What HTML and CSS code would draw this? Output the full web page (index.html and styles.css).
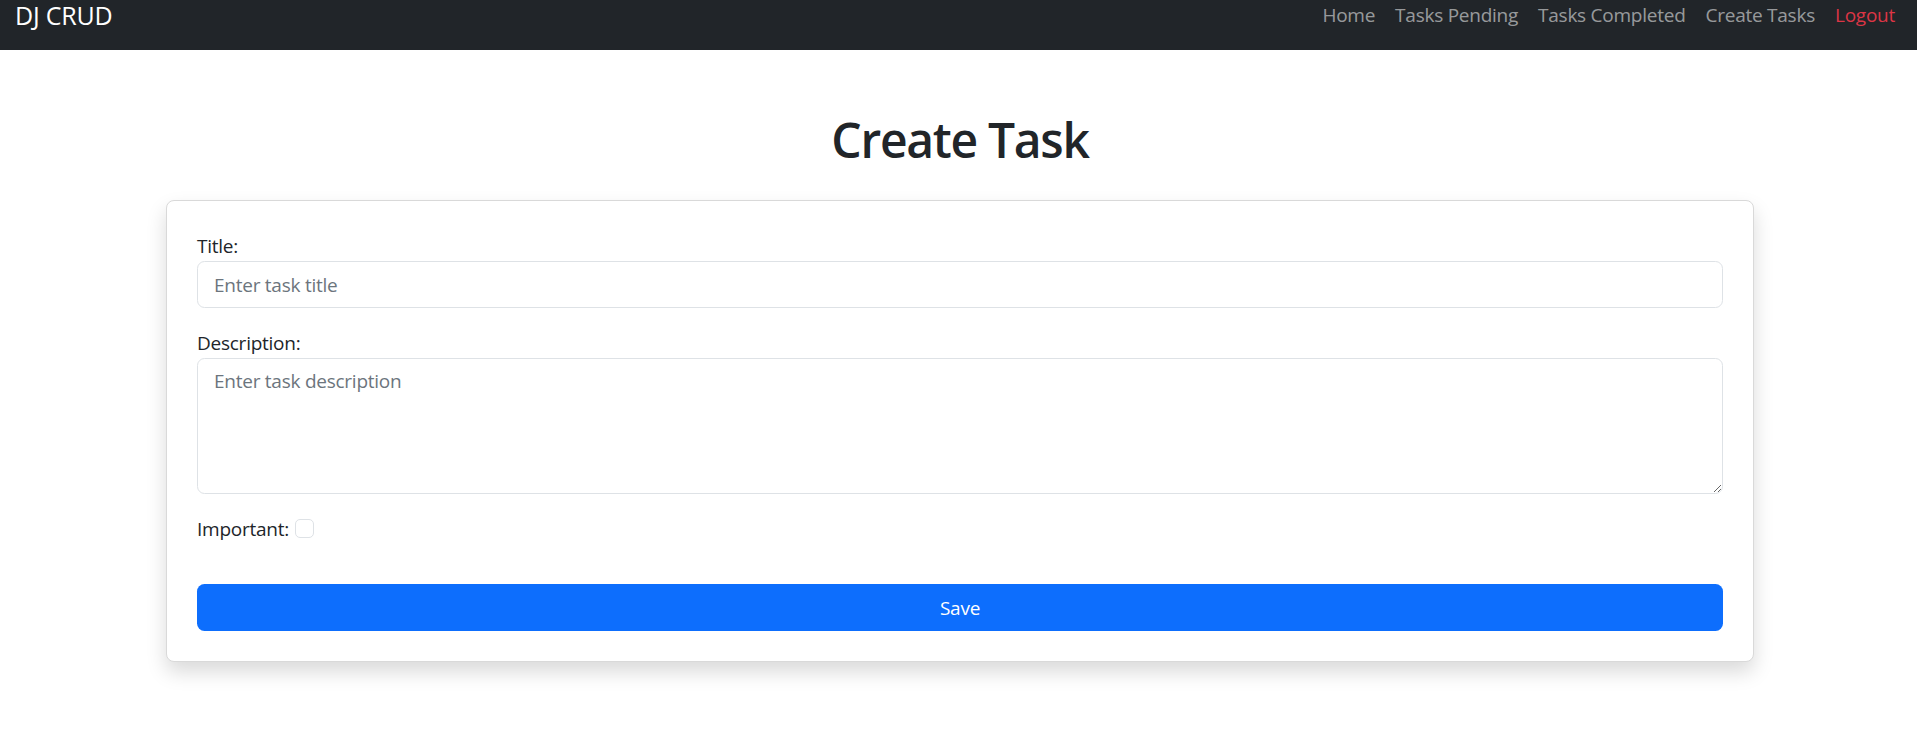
FILE: index.html
```html
<!DOCTYPE html>
<html lang="en">
<head>
<meta charset="utf-8">
<title>DJ CRUD - Create Task</title>
<link rel="stylesheet" href="styles.css">
</head>
<body>
<nav class="navbar">
  <a class="brand" href="#">DJ CRUD</a>
  <ul class="nav-links">
    <li><a class="nav-link" href="#">Home</a></li>
    <li><a class="nav-link" href="#">Tasks Pending</a></li>
    <li><a class="nav-link" href="#">Tasks Completed</a></li>
    <li><a class="nav-link" href="#">Create Tasks</a></li>
    <li><a class="nav-link logout" href="#">Logout</a></li>
  </ul>
</nav>
<main class="main">
  <h1 class="page-title">Create Task</h1>
  <form class="card">
    <div class="field">
      <label class="label" for="title">Title:</label>
      <input class="control" type="text" id="title" placeholder="Enter task title">
    </div>
    <div class="field">
      <label class="label" for="description">Description:</label>
      <textarea class="control textarea" id="description" placeholder="Enter task description"></textarea>
    </div>
    <div class="field check-row">
      <label class="label inline" for="important">Important:</label>
      <input class="check" type="checkbox" id="important">
    </div>
    <button class="btn-save" type="button">Save</button>
  </form>
</main>
</body>
</html>
```
FILE: styles.css
```css
* { box-sizing: border-box; }
html, body { margin: 0; padding: 0; }
body {
  font-family: "Open Sans", "Noto Sans", sans-serif;
  font-size: 19px;
  letter-spacing: -0.25px;
  line-height: 30px;
  color: #212529;
  background: #ffffff;
}
.navbar {
  height: 50px;
  background: #212529;
  display: flex;
  justify-content: space-between;
  align-items: flex-start;
  padding: 0 12px 0 15px;
}
.brand {
  color: #ffffff;
  text-decoration: none;
  font-size: 25px;
  letter-spacing: -0.2px;
  line-height: 30px;
}
.nav-links {
  list-style: none;
  margin: 0;
  padding: 0;
  display: flex;
}
.nav-link {
  display: block;
  padding: 0 10px;
  color: rgba(255, 255, 255, 0.55);
  text-decoration: none;
  line-height: 30px;
}
.nav-link.logout { color: #dc3545; }
.main {
  padding: 0 0 60px 3px;
}
.page-title {
  margin: 60px 0 30px;
  text-align: center;
  font-size: 48px;
  font-weight: 600;
  letter-spacing: -1.3px;
  line-height: 60px;
}
.card {
  max-width: 1588px;
  margin: 0 auto;
  background: #fff;
  border: 1px solid #d9d9d9;
  border-radius: 8px;
  padding: 30px;
  box-shadow: 0 10px 20px rgba(0, 0, 0, 0.15);
}
.field { margin-bottom: 20px; }
.label { display: block; }
.label.inline { display: inline; }
.control {
  display: block;
  width: 100%;
  height: 47px;
  padding: 7px 16px;
  font: inherit;
  letter-spacing: inherit;
  color: #212529;
  border: 1px solid #dee2e6;
  border-radius: 7.5px;
  background: #fff;
  outline: none;
}
.control::placeholder { color: #6c757d; opacity: 1; }
.textarea {
  height: 136px;
  resize: vertical;
}
.check-row { margin-bottom: 40px; }
.check {
  appearance: none;
  -webkit-appearance: none;
  width: 19px;
  height: 19px;
  margin: 0 0 0 1px;
  border: 1px solid #dee2e6;
  border-radius: 5px;
  background: #fff;
  vertical-align: -2px;
}
.btn-save {
  display: block;
  width: 100%;
  height: 47px;
  border: 0;
  border-radius: 7.5px;
  background: #0d6efd;
  color: #fff;
  font: inherit;
  letter-spacing: inherit;
  cursor: pointer;
}
```
